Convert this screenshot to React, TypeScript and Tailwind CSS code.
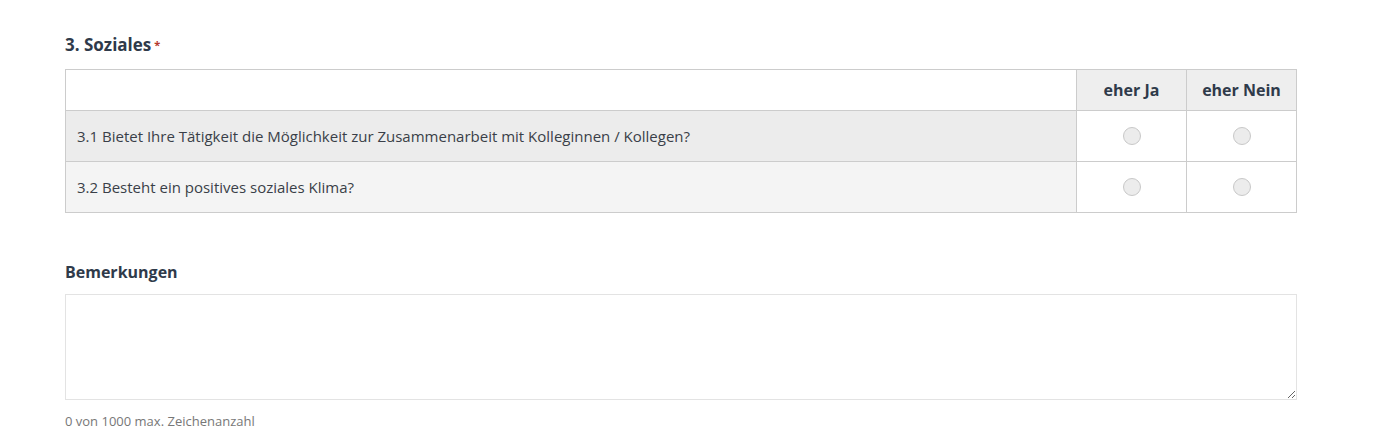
import React from "react";

const questions = [
  "3.1 Bietet Ihre Tätigkeit die Möglichkeit zur Zusammenarbeit mit Kolleginnen / Kollegen?",
  "3.2 Besteht ein positives soziales Klima?",
];

function Radio() {
  return (
    <span className="inline-block w-[18px] h-[18px] rounded-full border border-[#c8c8c8] bg-[#ececec]" />
  );
}

export default function App() {
  return (
    <div className="w-[1377px] h-[441px] bg-white font-['Open_Sans',sans-serif] text-[#333a45]">
      <div className="pl-[65px] pt-[33px]">
        <h3 className="text-[17px] font-bold leading-[24px] text-[#2f3a4a]">
          3. Soziales<span className="text-[#b5382c] text-[11px] align-top ml-[3px]">*</span>
        </h3>

        <table className="mt-[12px] w-[1232px] border-collapse text-[15px]">
          <thead>
            <tr className="h-[41px]">
              <th className="border border-[#cccccc] bg-white" />
              <th className="w-[110px] border border-[#cccccc] bg-[#eeeeee] text-[16px] font-bold text-[#2f3a4a]">
                eher Ja
              </th>
              <th className="w-[110px] border border-[#cccccc] bg-[#eeeeee] text-[16px] font-bold text-[#2f3a4a]">
                eher Nein
              </th>
            </tr>
          </thead>
          <tbody>
            {questions.map((q, i) => (
              <tr key={q} className="h-[51px]">
                <td
                  className={
                    "border border-[#cccccc] px-[11px] text-[#3a3f48] " +
                    (i === 0 ? "bg-[#ececec]" : "bg-[#f4f4f4]")
                  }
                >
                  {q}
                </td>
                <td className="border border-[#cccccc] bg-white align-middle">
                  <div className="flex justify-center"><Radio /></div>
                </td>
                <td className="border border-[#cccccc] bg-white align-middle">
                  <div className="flex justify-center"><Radio /></div>
                </td>
              </tr>
            ))}
          </tbody>
        </table>

        <label className="block mt-[47px] text-[16px] font-bold leading-[24px] text-[#2f3a4a]">
          Bemerkungen
        </label>
        <textarea className="mt-[10px] block w-[1232px] h-[106px] border border-[#e3e3e3] resize-y outline-none" />
        <p className="mt-[12px] text-[13px] text-[#777777]">0 von 1000 max. Zeichenanzahl</p>
      </div>
    </div>
  );
}
